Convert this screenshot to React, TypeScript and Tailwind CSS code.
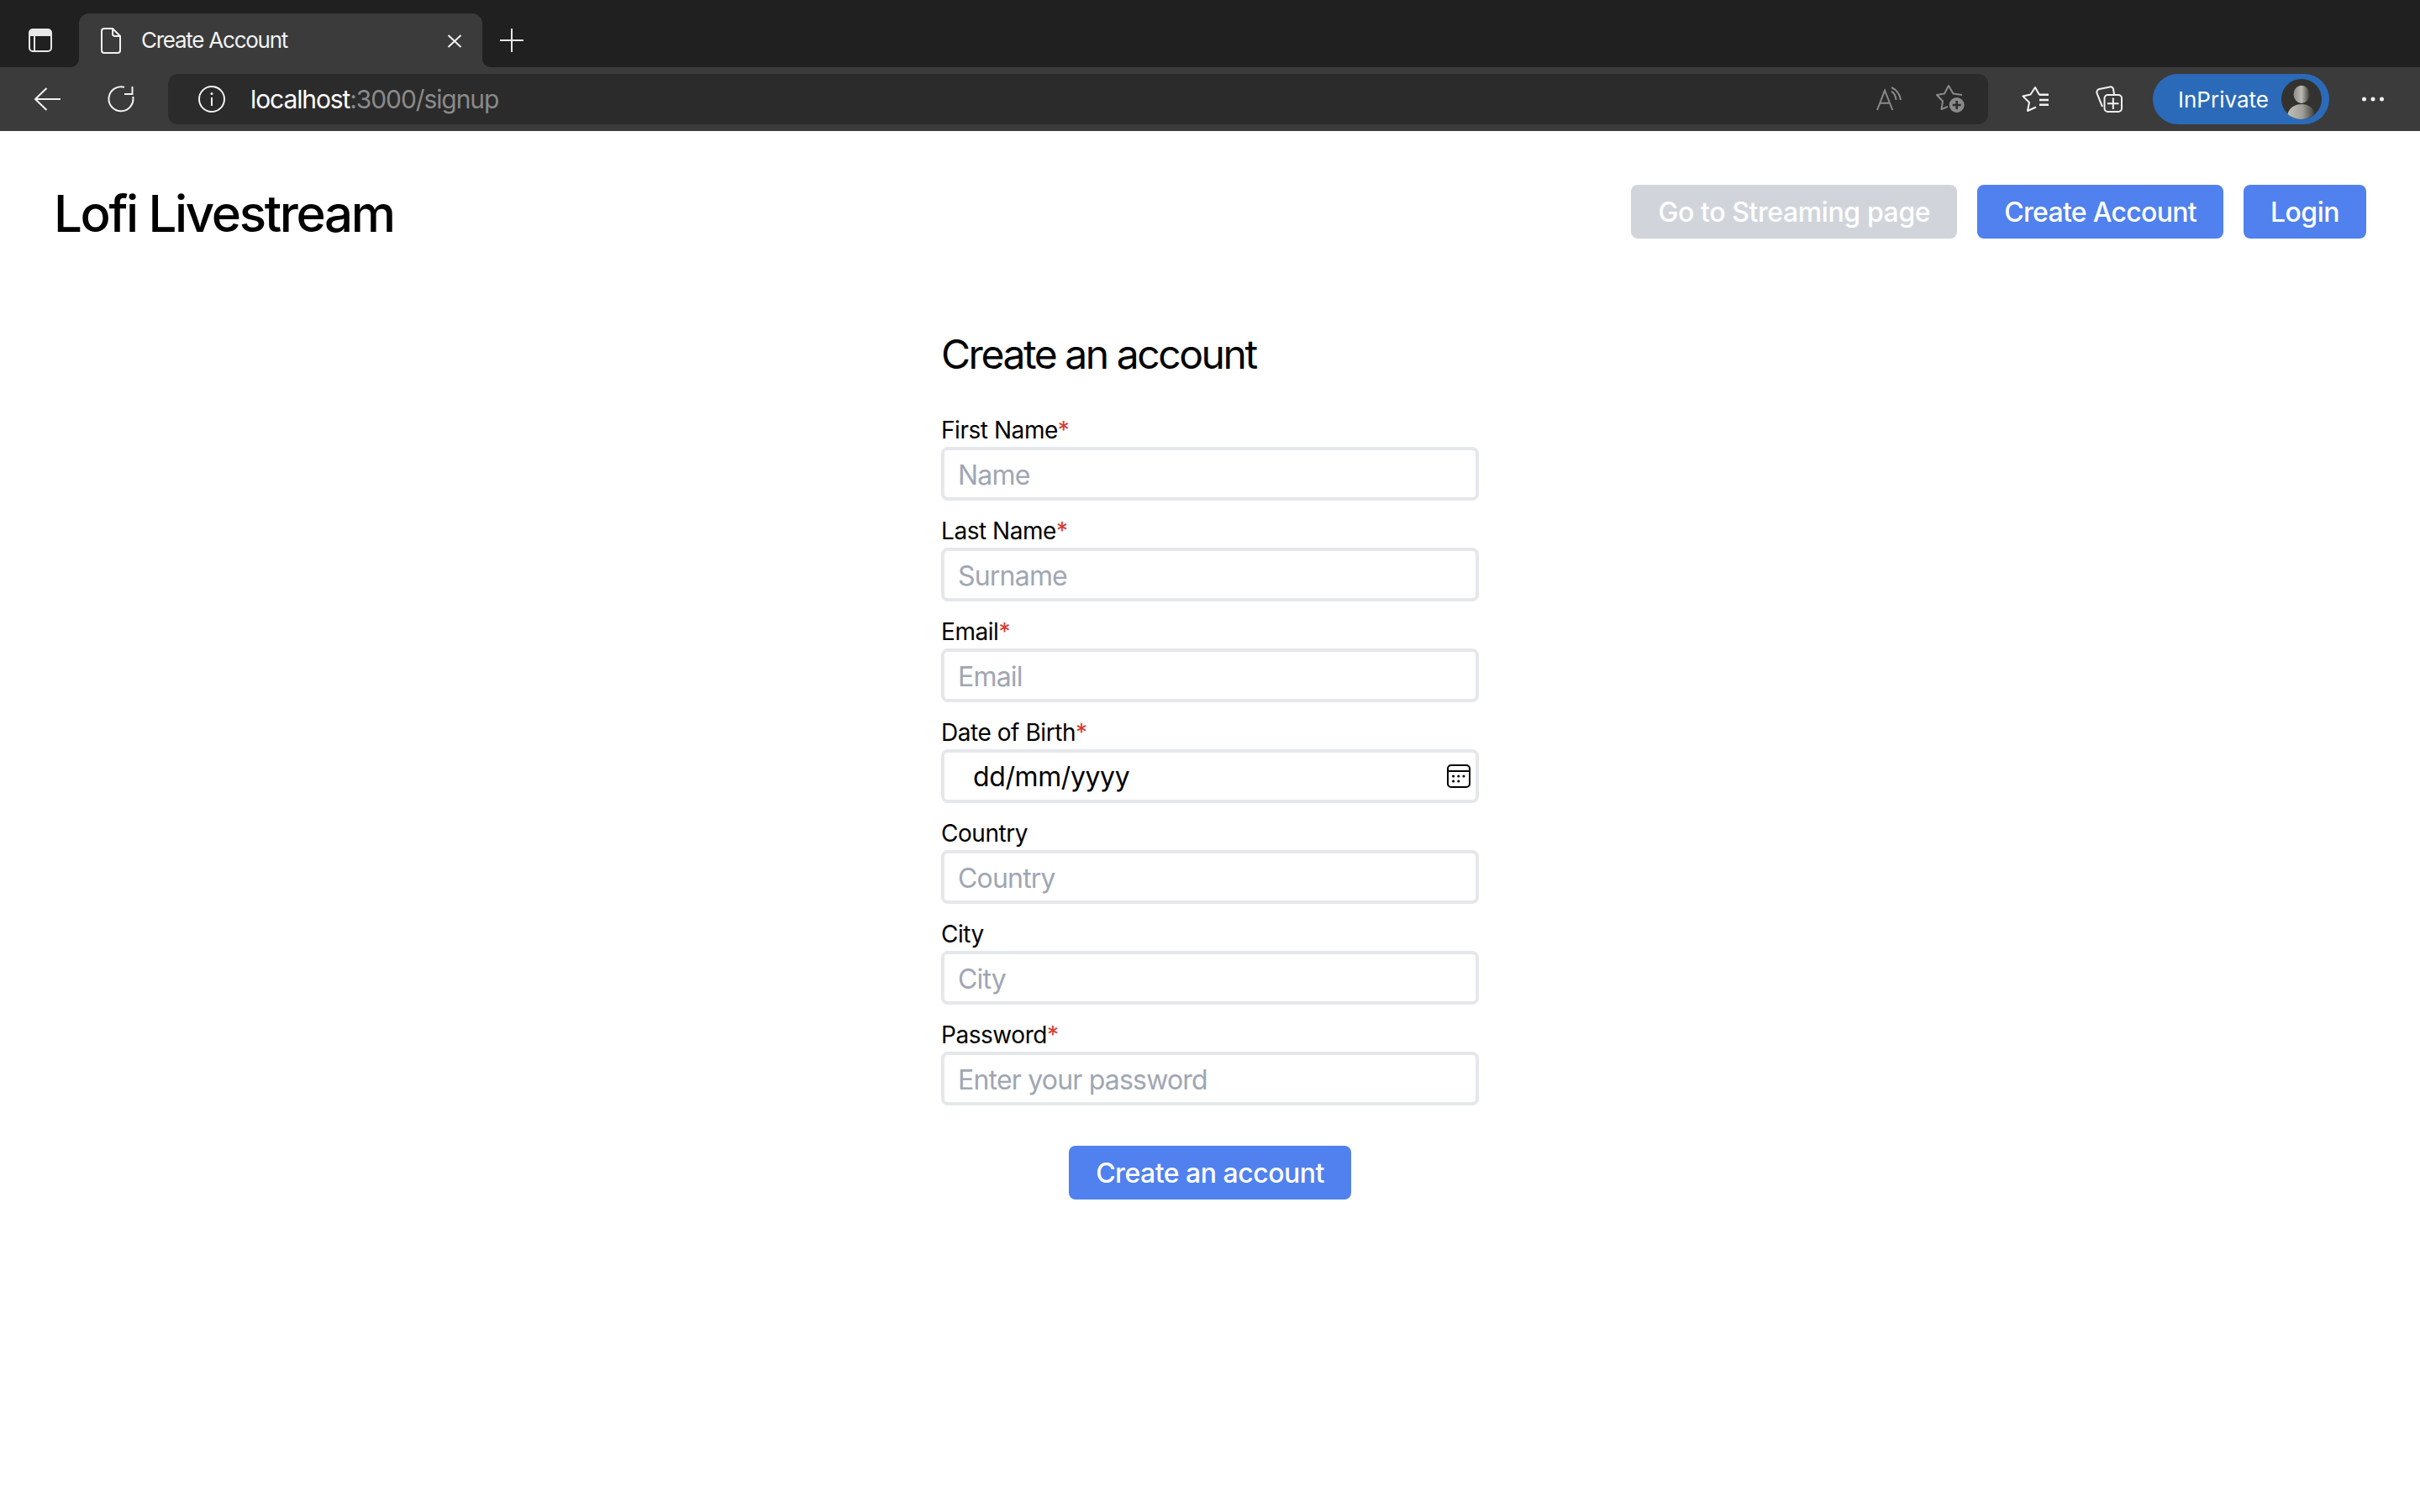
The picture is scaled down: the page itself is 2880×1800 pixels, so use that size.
const inter = 'font-["Inter",sans-serif]';

const inputClass =
  'block w-full h-16 px-4 pt-[2px] border-4 border-[#e5e7eb] rounded-lg bg-white text-[32px] tracking-[-0.8px] text-black outline-none placeholder:text-[#a0a6b3]';

const buttonClass = 'h-16 px-8 pt-[2px] rounded-lg text-[32px] font-medium text-white';

const fields = [
  { label: 'First Name', placeholder: 'Name', required: true },
  { label: 'Last Name', placeholder: 'Surname', required: true },
  { label: 'Email', placeholder: 'Email', required: true },
  { label: 'Date of Birth', date: true, required: true },
  { label: 'Country', placeholder: 'Country' },
  { label: 'City', placeholder: 'City' },
  { label: 'Password', placeholder: 'Enter your password', required: true },
];

const TabStrip = () => (
  <div className="flex items-end h-20 bg-[#202020]">
    <svg width="28" height="28" viewBox="0 0 28 28" className="ml-[34px] mb-[18px]" fill="none">
      <rect x="1" y="1" width="26" height="26" rx="4" stroke="#e8e8e8" strokeWidth="2" />
      <path d="M5 1h18a4 4 0 0 1 4 4v4H1V5a4 4 0 0 1 4-4z" fill="#e8e8e8" />
      <path d="M7 8v19" stroke="#e8e8e8" strokeWidth="2" />
    </svg>
    <div className="relative flex items-center w-[480px] h-16 ml-8 rounded-t-xl bg-[#3b3b3b]">
      <span className="absolute -left-[10px] bottom-0 w-[10px] h-[10px] bg-[#3b3b3b]">
        <span className="block w-full h-full rounded-br-[10px] bg-[#202020]" />
      </span>
      <span className="absolute -right-[10px] bottom-0 w-[10px] h-[10px] bg-[#3b3b3b]">
        <span className="block w-full h-full rounded-bl-[10px] bg-[#202020]" />
      </span>
      <svg width="24" height="31" viewBox="0 0 24 31" className="ml-[26px]" fill="none" stroke="#f2f2f2" strokeWidth="2">
        <path d="M4 1h10l9 9v17a3 3 0 0 1-3 3H4a3 3 0 0 1-3-3V4a3 3 0 0 1 3-3z" strokeLinejoin="round" />
        <path d="M14 1v6a3 3 0 0 0 3 3h6" />
      </svg>
      <span className={`ml-[24px] text-[26px] leading-8 tracking-[-1.25px] text-[#f2f2f2] ${inter}`}>Create Account</span>
      <svg width="18" height="16" viewBox="0 0 18 16" className="ml-auto mr-[24px] mt-[2px]" fill="none" stroke="#f2f2f2" strokeWidth="2">
        <path d="M1.500 1l15 14M16.500 1l-15 14" />
      </svg>
    </div>
    <svg width="28" height="28" viewBox="0 0 28 28" className="ml-[21px] mb-[18px]" fill="none" stroke="#e8e8e8" strokeWidth="2">
      <path d="M14 0v28M0 14h28" />
    </svg>
  </div>
);

const Toolbar = () => (
  <div className={`flex items-center h-[76px] bg-[#3b3b3b] ${inter}`}>
    <svg width="32" height="28" viewBox="0 0 32 28" className="ml-10" fill="none" stroke="#f2f2f2" strokeWidth="2">
      <path d="M32 14H2M15.500 1L2 14l13.500 13" />
    </svg>
    <svg width="32" height="32" viewBox="0 0 32 32" className="ml-14" fill="none" stroke="#f2f2f2" strokeWidth="2">
      <path d="M20 1.800A14.500 14.500 0 1 0 30.200 13" />
      <path d="M29.500 1v9H20" />
    </svg>
    <div className="flex items-center w-[2166px] h-[60px] ml-10 rounded-xl bg-[#2b2b2b]">
      <svg width="32" height="32" viewBox="0 0 32 32" className="ml-9" fill="none" stroke="#f2f2f2" strokeWidth="2">
        <circle cx="16" cy="16" r="15" />
        <path d="M16 14v10" />
        <circle cx="16" cy="9.500" r="1.500" fill="#f2f2f2" stroke="none" />
      </svg>
      <span className="ml-[30px] text-[30px] leading-9 tracking-[-1.1px] text-white">
        localhost<span className="text-[#8a8a8a]">:3000/signup</span>
      </span>
      <svg width="32" height="30" viewBox="0 0 32 30" className="ml-auto" fill="none" stroke="#8a8a8a" strokeWidth="2">
        <path d="M2 28L11 4.700 20.300 28M5 19.700h12.500" />
        <path d="M19 6c3 1.500 5 5 5.500 10M19 1c5 2.500 10 8 11 15" />
      </svg>
      <svg width="34" height="34" viewBox="0 0 34 34" className="ml-10 mr-7" fill="none">
        <path d="M31 12L20.500 10.500 15 1 10 10.500 1 12l7 7.500L6.500 29l7.500-3" stroke="#8a8a8a" strokeWidth="2" strokeLinejoin="round" />
        <circle cx="24.700" cy="24" r="9" fill="#8a8a8a" />
        <path d="M24.700 19v10M19.700 24h10" stroke="#2b2b2b" strokeWidth="2.500" />
      </svg>
    </div>
    <svg width="32" height="30" viewBox="0 0 32 30" className="ml-10" fill="none" stroke="#f2f2f2" strokeWidth="2">
      <path d="M21 10L16 1l-5.500 8.500-9 2L9 19 7 29l10-4.500" strokeLinejoin="round" />
      <path d="M21 9.700h11M21 16h11M21 21.700h11" strokeWidth="2.500" />
    </svg>
    <svg width="32" height="32" viewBox="0 0 32 32" className="ml-14" fill="none" stroke="#f2f2f2" strokeWidth="2">
      <path d="M8 25L1.500 9a4 4 0 0 1 3-5L17 1.500a3 3 0 0 1 4 2.500l1 6" />
      <rect x="10.500" y="11" width="20.500" height="20" rx="4" />
      <path d="M20.800 14.500v13.500M14 21.300h13.500" />
    </svg>
    <div className="flex items-center w-[210px] h-[60px] ml-9 rounded-full bg-[#2b6ab9]">
      <span className="ml-[30px] pt-[2px] text-[26px] leading-8 text-white">InPrivate</span>
      <svg width="48" height="48" viewBox="0 0 48 48" className="ml-auto mr-[9px]">
        <defs>
          <linearGradient id="face" x1="0" x2="1" y1="0" y2="0">
            <stop offset="0" stopColor="#8f8d88" />
            <stop offset="0.5" stopColor="#bcbab3" />
            <stop offset="1" stopColor="#3e3d39" />
          </linearGradient>
          <linearGradient id="shoulders" x1="0" x2="1" y1="0" y2="0">
            <stop offset="0" stopColor="#c2bfb8" />
            <stop offset="0.55" stopColor="#a09e98" />
            <stop offset="1" stopColor="#3e3d39" />
          </linearGradient>
        </defs>
        <circle cx="24" cy="24" r="24" fill="#33322f" />
        <ellipse cx="24" cy="18.300" rx="9.500" ry="10.600" fill="url(#face)" />
        <path d="M7.300 41.700C10 34 16 30 24 30s14 4 15.700 11.700A24 24 0 0 1 7.300 41.700z" fill="url(#shoulders)" />
      </svg>
    </div>
    <svg width="26" height="6" viewBox="0 0 26 6" className="ml-[39px]" fill="#f2f2f2">
      <circle cx="2.500" cy="3" r="2.500" />
      <circle cx="13" cy="3" r="2.500" />
      <circle cx="23.500" cy="3" r="2.500" />
    </svg>
  </div>
);

const DateField = () => (
  <div className="flex items-center w-full h-16 pl-[34px] pr-[6px] border-4 border-[#e5e7eb] rounded-lg bg-white text-[32px] tracking-[-0.4px] text-black">
    <span className="pt-[2px]">dd/mm/yyyy</span>
    <svg width="28" height="28" viewBox="0 0 28 28" className="ml-auto" fill="none" stroke="#000" strokeWidth="2">
      <rect x="1" y="1" width="26" height="26" rx="4" />
      <path d="M1 8h26" />
      <g fill="#000" stroke="none">
        <circle cx="7.600" cy="14" r="1.600" />
        <circle cx="13.800" cy="14" r="1.600" />
        <circle cx="20" cy="14" r="1.600" />
        <circle cx="7.600" cy="20" r="1.600" />
        <circle cx="13.800" cy="20" r="1.600" />
      </g>
    </svg>
  </div>
);

const App = () => {
  return (
    <div className={`min-h-screen bg-white text-black ${inter}`}>
      <TabStrip />
      <Toolbar />
      <header className="flex items-center justify-between px-16 pt-[60px]">
        <h1 className="h-[72px] text-[60px] leading-[76px] font-medium tracking-[-2.35px]">Lofi Livestream</h1>
        <div className="flex gap-6">
          <button className={`${buttonClass} tracking-[-0.4px] bg-[#d1d5db]`}>Go to Streaming page</button>
          <button className={`${buttonClass} tracking-[-0.7px] bg-[#5081ee]`}>Create Account</button>
          <button className={`${buttonClass} tracking-[-0.5px] bg-[#5081ee]`}>Login</button>
        </div>
      </header>
      <form className="w-[640px] mx-auto mt-[102px]">
        <h2 className="text-[48px] leading-16 tracking-[-2.45px] mb-[38px]">Create an account</h2>
        <div className="flex flex-col gap-4">
          {fields.map((field) => (
            <div key={field.label}>
              <label className="block text-[28px] leading-10 tracking-[-0.45px]">
                {field.label}
                {field.required && <span className="text-[#d93a32]">*</span>}
              </label>
              {field.date ? (
                <DateField />
              ) : (
                <input type="text" placeholder={field.placeholder} className={inputClass} />
              )}
            </div>
          ))}
        </div>
        <div className="flex justify-center mt-12">
          <button type="button" className={`${buttonClass} tracking-[-0.5px] bg-[#5081ee]`}>
            Create an account
          </button>
        </div>
      </form>
    </div>
  );
};

export default App;
